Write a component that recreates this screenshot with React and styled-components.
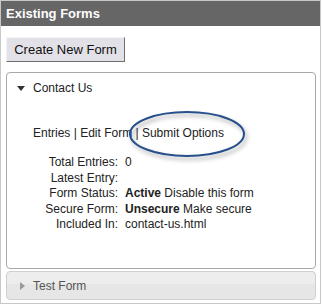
import React from 'react';
import styled, { createGlobalStyle } from 'styled-components';

const GlobalStyle = createGlobalStyle`
  html, body {
    margin: 0;
    padding: 0;
    background: #fff;
  }
  body {
    font-family: 'Liberation Sans', Arial, sans-serif;
  }
`;

const Frame = styled.div`
  width: 319px;
  height: 302px;
  border: 1px solid #c8c8c8;
  display: flex;
  flex-direction: column;
  background: #fff;
`;

const TitleBar = styled.div`
  height: 25px;
  background: #666;
  color: #fff;
  font-weight: bold;
  font-size: 13px;
  display: flex;
  align-items: center;
  padding-left: 5px;
`;

const Body = styled.div`
  padding: 11px 4px 0 5px;
  display: flex;
  flex-direction: column;
`;

const CreateButton = styled.button`
  align-self: flex-start;
  width: 119px;
  height: 25px;
  padding: 0;
  font-family: 'Liberation Sans', Arial, sans-serif;
  font-size: 13px;
  color: #111;
  background: #e1e1e7;
  border: 1px solid;
  border-color: #f4f4f4 #6f6f6f #6f6f6f #f4f4f4;
  cursor: pointer;
`;

const Panel = styled.div`
  margin-top: ${(p) => p.$gap}px;
  border: 1px solid ${(p) => (p.$open ? '#a8a8a8' : '#cfcfcf')};
  border-radius: 4px;
  height: ${(p) => p.$height}px;
  box-sizing: border-box;
  position: relative;
  background: ${(p) =>
    p.$open ? '#fff' : 'linear-gradient(to bottom, #ededed 0%, #ededed 45%, #e6e6e6 46%, #e6e6e6 100%)'};
`;

const PanelHeader = styled.div`
  height: ${(p) => p.$height}px;
  display: flex;
  align-items: center;
  padding-left: 10px;
  font-size: 12px;
  color: ${(p) => (p.$open ? '#222' : '#555')};
`;

const Arrow = styled.span`
  width: 8px;
  display: inline-flex;
  align-items: center;
  margin-right: 8px;
  padding-left: ${(p) => (p.$open ? 0 : 3)}px;
  box-sizing: border-box;
`;

const Content = styled.div`
  padding: 23px 0 0 26px;
  font-size: 12px;
  color: #222;
`;

const Links = styled.div`
  line-height: 15px;
`;

const InfoGrid = styled.div`
  margin-top: 14px;
  margin-left: -26px;
  display: grid;
  grid-template-columns: 111px auto;
  column-gap: 7px;
  row-gap: 0;
  line-height: 15.5px;
`;

const Label = styled.div`
  text-align: right;
`;

const Value = styled.div`
  b {
    font-weight: bold;
  }
`;

const Circle = styled.svg`
  position: absolute;
  left: 117px;
  top: 35px;
  overflow: visible;
  pointer-events: none;
`;

const TriangleDown = () => (
  <svg width="8" height="5" viewBox="0 0 8 5">
    <path d="M0 0 L8 0 L4 5 Z" fill="#333" />
  </svg>
);

const TriangleRight = () => (
  <svg width="5" height="8" viewBox="0 0 5 8">
    <path d="M0 0 L5 4 L0 8 Z" fill="#999" />
  </svg>
);

const rows = [
  ['Total Entries:', '0'],
  ['Latest Entry:', ''],
  ['Form Status:', <><b>Active</b> Disable this form</>],
  ['Secure Form:', <><b>Unsecure</b> Make secure</>],
  ['Included In:', 'contact-us.html'],
];

export default function App() {
  return (
    <>
      <GlobalStyle />
      <Frame>
        <TitleBar>Existing Forms</TitleBar>
        <Body>
          <CreateButton>Create New Form</CreateButton>
          <Panel $open $gap={10} $height={197}>
            <PanelHeader $open $height={30}>
              <Arrow $open>
                <TriangleDown />
              </Arrow>
              Contact Us
            </PanelHeader>
            <Content>
              <Links>Entries | Edit Form | Submit Options</Links>
              <InfoGrid>
                {rows.map(([label, value]) => (
                  <React.Fragment key={label}>
                    <Label>{label}</Label>
                    <Value>{value}</Value>
                  </React.Fragment>
                ))}
              </InfoGrid>
            </Content>
            <Circle width="124" height="52" viewBox="0 0 124 52">
              <defs>
                <filter id="sh" x="-20%" y="-30%" width="140%" height="170%">
                  <feDropShadow dx="2" dy="3" stdDeviation="2" floodColor="#000" floodOpacity="0.35" />
                </filter>
              </defs>
              <ellipse cx="63" cy="26" rx="57" ry="22" fill="none" stroke="#27508c" strokeWidth="2" filter="url(#sh)" />
            </Circle>
          </Panel>
          <Panel $gap={2} $height={29}>
            <PanelHeader $height={27}>
              <Arrow>
                <TriangleRight />
              </Arrow>
              Test Form
            </PanelHeader>
          </Panel>
        </Body>
      </Frame>
    </>
  );
}
